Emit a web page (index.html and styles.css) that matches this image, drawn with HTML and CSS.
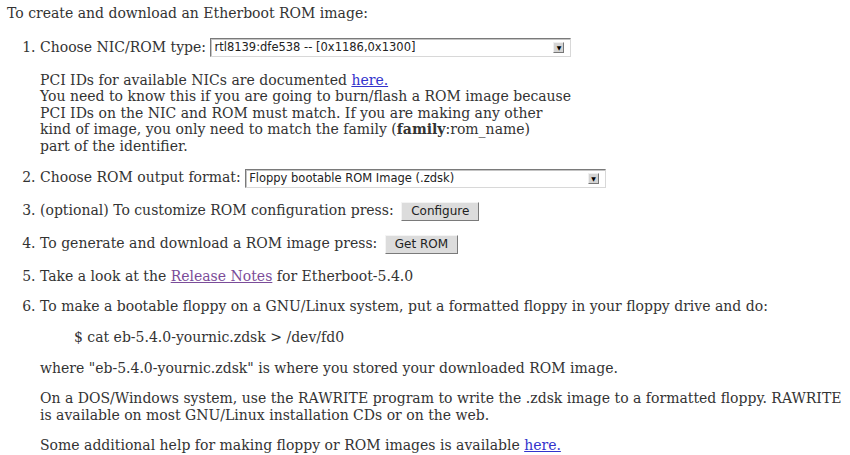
FILE: index.html
```html
<!DOCTYPE html>
<html lang="en">
<head>
    <meta charset="UTF-8">
    <title>Etherboot ROM-o-matic</title>
    <link rel="stylesheet" href="styles.css">
</head>
<body>
    <p class="intro">To create and download an Etherboot ROM image:</p>
    <ol class="steps">
        <li class="step">
            <div class="row">Choose NIC/ROM type: <span class="combo"><span class="combo-text">rtl8139:dfe538 -- [0x1186,0x1300]</span><span class="arrow">&#9660;</span></span></div>
            <p class="note">PCI IDs for available NICs are documented <a class="link" href="#">here.</a><br>
            You need to know this if you are going to burn/flash a ROM image because<br>
            PCI IDs on the NIC and ROM must match. If you are making any other<br>
            kind of image, you only need to match the family (<b>family</b>:rom_name)<br>
            part of the identifier.</p>
        </li>
        <li class="step">
            <div class="row">Choose ROM output format: <span class="combo"><span class="combo-text">Floppy bootable ROM Image (.zdsk)</span><span class="arrow">&#9660;</span></span></div>
        </li>
        <li class="step">
            <div class="row">(optional) To customize ROM configuration press: <span class="btn">Configure</span></div>
        </li>
        <li class="step last-button">
            <div class="row">To generate and download a ROM image press: <span class="btn">Get ROM</span></div>
        </li>
        <li class="step">
            <div class="line">Take a look at the <a class="visited" href="#">Release Notes</a> for Etherboot-5.4.0</div>
        </li>
        <li class="step">
            <div class="line">To make a bootable floppy on a GNU/Linux system, put a formatted floppy in your floppy drive and do:</div>
            <p class="cmd">$ cat eb-5.4.0-yournic.zdsk &gt; /dev/fd0</p>
            <p class="para">where "eb-5.4.0-yournic.zdsk" is where you stored your downloaded ROM image.</p>
            <p class="para">On a DOS/Windows system, use the RAWRITE program to write the .zdsk image to a formatted floppy. RAWRITE<br>
            is available on most GNU/Linux installation CDs or on the web.</p>
            <p class="para">Some additional help for making floppy or ROM images is available <a class="link" href="#">here.</a></p>
        </li>
    </ol>
</body>
</html>
```

FILE: styles.css
```css
body{
    margin: 0;
    padding: 5px 7px;
    font-family: "DejaVu Serif", serif;
    font-size: 14px;
    color: #333;
    background: #fff;
    line-height: 16.5px;
}
.intro{
    margin: 0 0 15px 0;
}
.steps{
    margin: 0;
    padding-left: 33px;
}
.step{
    margin-bottom: 13px;
}
.last-button{
    margin-bottom: 15px;
}
.row{
    height: 20px;
    line-height: 20px;
    white-space: nowrap;
}
.line{
    line-height: 16.5px;
}
.note{
    margin: 15px 0 0 0;
}
.link{
    color: #3333cc;
}
.visited{
    color: #7b4c99;
}
.combo{
    display: inline-flex;
    align-items: center;
    justify-content: space-between;
    vertical-align: middle;
    width: 361px;
    height: 19px;
    box-sizing: border-box;
    border: 1px solid #7a7a7a;
    border-right-color: #d8d8d8;
    border-bottom-color: #d8d8d8;
    box-shadow: inset 1px 1px 0 #c4c4c4;
    font-family: "DejaVu Sans", sans-serif;
    font-size: 11.5px;
    line-height: 17px;
    color: #222;
    padding-left: 3px;
    padding-right: 6px;
}
.arrow{
    width: 11px;
    height: 11px;
    box-sizing: border-box;
    background: #d4d4d4;
    border: 1px solid #f0f0f0;
    border-right-color: #777;
    border-bottom-color: #777;
    font-size: 6px;
    line-height: 9px;
    text-align: center;
    color: #000;
}
.btn{
    display: inline-block;
    vertical-align: middle;
    height: 19px;
    box-sizing: border-box;
    padding: 0 9px;
    margin-left: 3px;
    background: #dcdcdc;
    border: 1px solid #f4f4f4;
    border-right-color: #7a7a7a;
    border-bottom-color: #7a7a7a;
    font-family: "DejaVu Sans", sans-serif;
    font-size: 12px;
    line-height: 17px;
    color: #222;
}
.cmd{
    margin: 15px 0 0 34px;
}
.para{
    margin: 14px 0 0 0;
}
```
